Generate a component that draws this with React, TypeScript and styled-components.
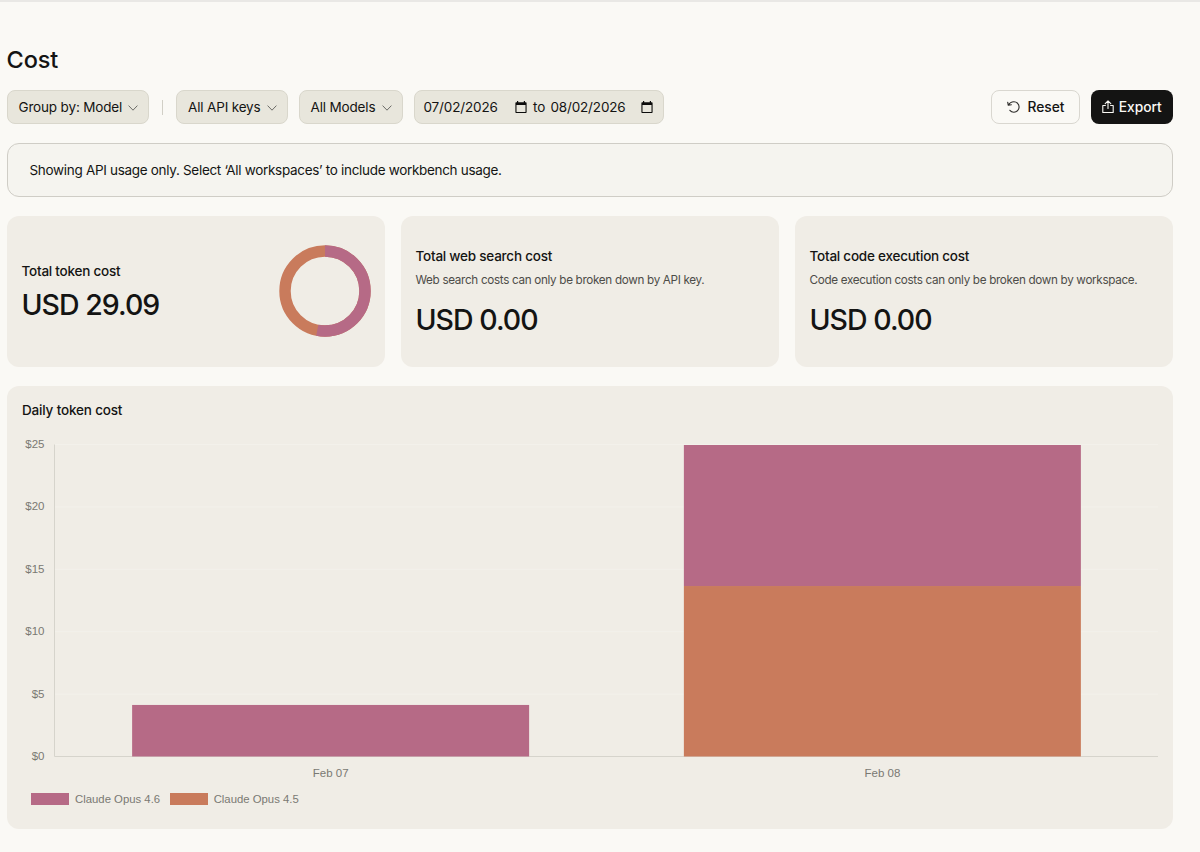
import styled, { createGlobalStyle } from "styled-components";

const colors = {
  page: "#faf9f5",
  card: "#f0ede6",
  control: "#e8e6dc",
  text: "#141413",
  muted: "#4d4c48",
  axis: "#7a7973",
  pink: "#b66a86",
  orange: "#c97b5c",
};

const series = [
  { name: "Claude Opus 4.6", color: colors.pink },
  { name: "Claude Opus 4.5", color: colors.orange },
];

const days = [
  { label: "Feb 07", values: [4.13, 0] },
  { label: "Feb 08", values: [11.3, 13.66] },
];

const ticks = [25, 20, 15, 10, 5, 0];

// plot area inside the chart svg
const plot = { left: 47.5, right: 1151, top: 22.5, bottom: 334.5, max: 25 };
const barWidth = 397;

const scaleY = (value: number) =>
  ((plot.bottom - plot.top) * value) / plot.max;

const Chevron = (): JSX.Element => (
  <svg width="10" height="6" viewBox="0 0 10 6" fill="none">
    <path d="M0.6 0.6L5 5.2L9.4 0.6" stroke="#5e5d59" strokeWidth="0.9" />
  </svg>
);

const CalendarIcon = (): JSX.Element => (
  <svg width="12" height="13" viewBox="0 0 12 13">
    <path
      d="M2 0h1.2v1.2h5.6V0H10v1.2h.9c.4 0 .7.3.7.7v9.4c0 .4-.3.7-.7.7H1.1c-.4 0-.7-.3-.7-.7V1.9c0-.4.3-.7.7-.7H2zM1.5 3.9v7h9v-7z"
      fill="#0c0c0b"
      fillRule="evenodd"
    />
  </svg>
);

const ResetIcon = (): JSX.Element => (
  <svg width="13" height="12" viewBox="0 0 13 12" fill="none">
    <path
      d="M0.7 1.2L1.3 4.3L4.4 3.8M1.4 4.2C2.6 1.9 4.4 0.8 6.9 0.8C9.8 0.8 12.1 3.1 12.1 6C12.1 8.9 9.8 11.2 6.9 11.2C5.2 11.2 3.8 10.5 2.9 9.3"
      stroke="#2b2a28"
      strokeWidth="1.1"
      strokeLinecap="round"
      strokeLinejoin="round"
    />
  </svg>
);

const ExportIcon = (): JSX.Element => (
  <svg width="12" height="14" viewBox="0 0 12 14" fill="none">
    <path
      d="M6 8.4V1M3.2 3.7L6 0.9L8.8 3.7M3.4 5.5H0.8V12.5H11.2V5.5H8.6"
      stroke="#faf9f5"
      strokeWidth="1.1"
      strokeLinecap="round"
      strokeLinejoin="round"
    />
  </svg>
);

const Donut = (): JSX.Element => {
  const radius = 40;
  const length = 2 * Math.PI * radius;
  const share = 0.53;

  return (
    <svg width="92" height="92" viewBox="0 0 92 92">
      <g transform="rotate(-90 46 46)" fill="none" strokeWidth="11.4">
        <circle cx="46" cy="46" r={radius} stroke={colors.orange} />
        <circle
          cx="46"
          cy="46"
          r={radius}
          stroke={colors.pink}
          strokeDasharray={`${length * share} ${length}`}
        />
      </g>
    </svg>
  );
};

const CostChart = (): JSX.Element => {
  const step = (plot.right - plot.left) / days.length;

  return (
    <ChartSvg width="1166" height="364" viewBox="0 0 1166 364">
      {ticks.map((tick) => {
        const y = plot.bottom - scaleY(tick);
        return (
          <g key={tick}>
            {tick > 0 && (
              <line
                x1={plot.left}
                x2={plot.right}
                y1={y}
                y2={y}
                stroke="#f3f1eb"
              />
            )}
            <AxisLabel x="37.5" y={y + 3.5} textAnchor="end">
              ${tick}
            </AxisLabel>
          </g>
        );
      })}
      <path
        d={`M${plot.left} ${plot.top}V${plot.bottom}H${plot.right}`}
        fill="none"
        stroke="#d6d4cc"
      />
      {days.map((day, i) => {
        const center = plot.left + step * (i + 0.5) + 0.25;
        const pink = scaleY(day.values[0]);
        const orange = scaleY(day.values[1]);
        return (
          <g key={day.label}>
            <rect
              x={center - barWidth / 2}
              y={plot.bottom - orange}
              width={barWidth}
              height={orange}
              fill={colors.orange}
            />
            <rect
              x={center - barWidth / 2}
              y={plot.bottom - orange - pink}
              width={barWidth}
              height={pink}
              fill={colors.pink}
            />
            <AxisLabel x={center} y="355" textAnchor="middle">
              {day.label}
            </AxisLabel>
          </g>
        );
      })}
    </ChartSvg>
  );
};

const App = (): JSX.Element => {
  return (
    <Page>
      <GlobalStyle />
      <Title>Cost</Title>
      <Toolbar>
        <Select $width={142.5}>
          Group by: Model
          <Chevron />
        </Select>
        <Divider />
        <Select $width={111.5}>
          All API keys
          <Chevron />
        </Select>
        <Select $width={104.5}>
          All Models
          <Chevron />
        </Select>
        <DateRange>
          <DateText>07/02/2026</DateText>
          <CalendarIcon />
          <To>to</To>
          <DateText>08/02/2026</DateText>
          <CalendarIcon />
        </DateRange>
        <Actions>
          <ResetButton>
            <ResetIcon />
            Reset
          </ResetButton>
          <ExportButton>
            <ExportIcon />
            Export
          </ExportButton>
        </Actions>
      </Toolbar>
      <Banner>
        Showing API usage only. Select ‘All workspaces’ to include workbench
        usage.
      </Banner>
      <Cards>
        <Card>
          <CardBody>
            <CardTitle>Total token cost</CardTitle>
            <Amount>USD 29.09</Amount>
          </CardBody>
          <Donut />
        </Card>
        <Card>
          <CardBody>
            <CardTitle>Total web search cost</CardTitle>
            <CardNote>
              Web search costs can only be broken down by API key.
            </CardNote>
            <Amount>USD 0.00</Amount>
          </CardBody>
        </Card>
        <Card>
          <CardBody>
            <CardTitle>Total code execution cost</CardTitle>
            <CardNote>
              Code execution costs can only be broken down by workspace.
            </CardNote>
            <Amount>USD 0.00</Amount>
          </CardBody>
        </Card>
      </Cards>
      <ChartCard>
        <ChartTitle>Daily token cost</ChartTitle>
        <CostChart />
        <Legend>
          {series.map((item) => (
            <LegendItem key={item.name}>
              <Swatch $color={item.color} />
              {item.name}
            </LegendItem>
          ))}
        </Legend>
      </ChartCard>
    </Page>
  );
};

export default App;

const GlobalStyle = createGlobalStyle`
  * {
    box-sizing: border-box;
  }

  body {
    margin: 0;
    background: ${colors.page};
    color: ${colors.text};
    font-family: Inter, "Liberation Sans", sans-serif;
    overflow: hidden;
  }

  svg {
    display: block;
    flex-shrink: 0;
  }
`;

const Page = styled.main`
  height: 852px;
  padding: 43px 27px 0 6.5px;
  border-top: 2px solid #e9e8e5;
`;

const Title = styled.h1`
  margin: 0;
  height: 45px;
  font-size: 23.5px;
  line-height: 30px;
  font-weight: 500;
  letter-spacing: -0.1px;
`;

const Toolbar = styled.div`
  display: flex;
  align-items: center;
  height: 34px;
  gap: 11px;
`;

const Select = styled.button<{ $width: number }>`
  display: flex;
  align-items: center;
  justify-content: space-between;
  width: ${(props) => props.$width}px;
  height: 34px;
  padding: 0 10px 1px 11px;
  border: 1px solid #d9d7cc;
  border-radius: 8px;
  background: ${colors.control};
  color: ${colors.text};
  font: 400 13.5px Inter, sans-serif;
  letter-spacing: -0.16px;
  white-space: nowrap;

  svg {
    margin-top: 2px;
  }
`;

const Divider = styled.span`
  width: 1px;
  height: 15px;
  margin: 0 2.5px 0 1.5px;
  background: #d1cfc6;
`;

const DateRange = styled.div`
  display: flex;
  align-items: center;
  width: 249.5px;
  height: 34px;
  padding: 0 0 1px 8.5px;
  border: 1px solid #d9d7cc;
  border-radius: 8px;
  background: ${colors.control};
  font-size: 13.5px;

  svg {
    margin-top: 2px;
  }
`;

const DateText = styled.span`
  width: 91px;
  letter-spacing: -0.15px;
`;

const To = styled.span`
  margin: 0 5px 0 6.5px;
`;

const Actions = styled.div`
  display: flex;
  gap: 11px;
  margin-left: auto;
`;

const Button = styled.button`
  display: flex;
  align-items: center;
  justify-content: center;
  height: 34px;
  padding: 0 0 1px;
  border-radius: 8px;
  font: 500 13.8px Inter, sans-serif;
`;

const ResetButton = styled(Button)`
  width: 89px;
  padding-left: 1px;
  gap: 7px;
  border: 1px solid #d9d7d0;
  background: ${colors.page};
  color: ${colors.text};
`;

const ExportButton = styled(Button)`
  width: 82px;
  gap: 4.5px;
  border: 0;
  background: ${colors.text};
  color: ${colors.page};
`;

const Banner = styled.div`
  display: flex;
  align-items: center;
  height: 53.5px;
  margin-top: 19px;
  padding: 1px 22px 0;
  border: 1px solid #cfcdc6;
  border-radius: 12px;
  background: #f5f4ef;
  font-size: 13.5px;
  letter-spacing: -0.31px;
`;

const Cards = styled.div`
  display: grid;
  grid-template-columns: repeat(3, 1fr);
  gap: 15.5px;
  margin-top: 19px;
`;

const Card = styled.section`
  display: flex;
  align-items: center;
  justify-content: space-between;
  height: 151px;
  padding: 0 14px 0 15px;
  border-radius: 12px;
  background: ${colors.card};
`;

const CardBody = styled.div`
  display: flex;
  flex-direction: column;
  padding-top: 2px;
  white-space: nowrap;
`;

const CardTitle = styled.h2`
  margin: 0;
  font-size: 13.5px;
  line-height: 20px;
  font-weight: 500;
  letter-spacing: -0.23px;
`;

const CardNote = styled.p`
  margin: 5px 0 7px;
  font-size: 11.7px;
  line-height: 18px;
  letter-spacing: -0.32px;
  color: ${colors.muted};
`;

const Amount = styled.div`
  margin-top: 5px;
  font-size: 28.5px;
  line-height: 38px;
  font-weight: 450;
  letter-spacing: -0.98px;
`;

const ChartCard = styled.section`
  height: 443px;
  margin-top: 19.5px;
  padding-top: 14px;
  border-radius: 12px;
  background: ${colors.card};
`;

const ChartTitle = styled(CardTitle)`
  margin-left: 15.5px;
  letter-spacing: -0.17px;
`;

const ChartSvg = styled.svg`
  margin-top: 2px;
`;

const AxisLabel = styled.text`
  fill: ${colors.axis};
  font-family: "Liberation Sans", Arial, sans-serif;
  font-size: 11.5px;
`;

const Legend = styled.div`
  display: flex;
  gap: 9.5px;
  margin: 6px 0 0 24.5px;
`;

const LegendItem = styled.div`
  display: flex;
  align-items: center;
  gap: 6px;
  color: ${colors.axis};
  font: 11.35px/14px "Liberation Sans", Arial, sans-serif;
`;

const Swatch = styled.span<{ $color: string }>`
  width: 38px;
  height: 11.5px;
  background: ${(props) => props.$color};
`;
